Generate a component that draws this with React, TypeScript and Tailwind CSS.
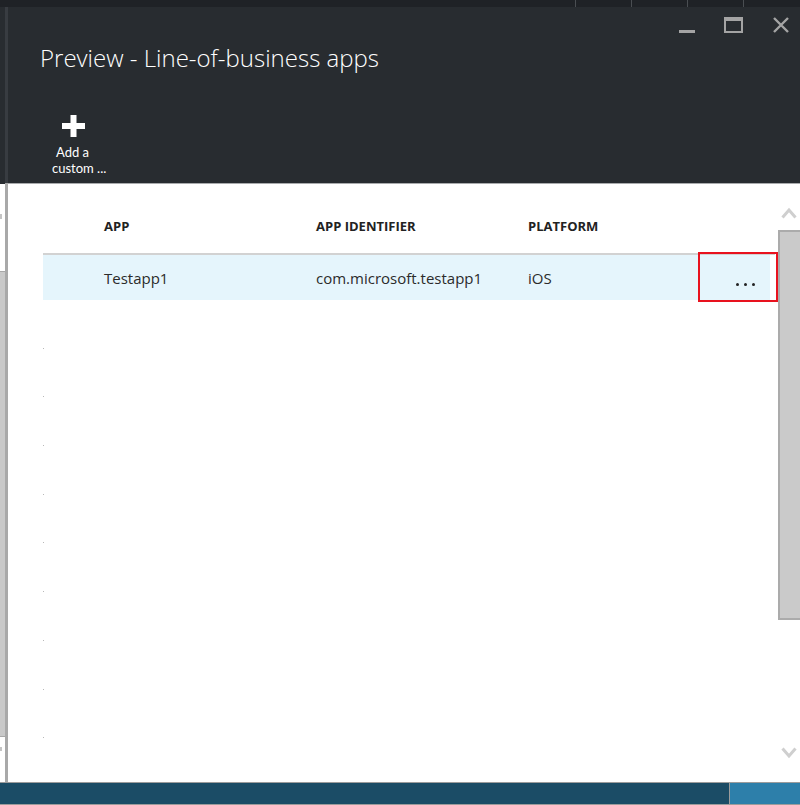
import React from "react";

const font = { fontFamily: '"Segoe UI", "Open Sans", "Noto Sans", sans-serif' };
const smallFont = { fontFamily: '"Segoe UI", Lato, "Open Sans", sans-serif' };

function Plus() {
  return (
    <svg width="23" height="22" viewBox="0 0 23 22">
      <rect x="8.5" y="0" width="6" height="22" fill="#ffffff" />
      <rect x="0" y="8" width="23" height="6" fill="#ffffff" />
    </svg>
  );
}

function Chevron({ up }: { up?: boolean }) {
  return (
    <svg width="16" height="12" viewBox="0 0 16 12">
      <path
        d={up ? "M1.5 10.5 L8 3 L14.5 10.5" : "M1.5 1.5 L8 9 L14.5 1.5"}
        fill="none"
        stroke="#cfcfcf"
        strokeWidth="3"
      />
    </svg>
  );
}

export default function App() {
  const emptyRows = Array.from({ length: 10 });
  return (
    <div className="w-[800px] h-[805px] flex flex-col overflow-hidden bg-white" style={font}>
      {/* top strip */}
      <div className="h-[7px] shrink-0 bg-[#1f2226] flex justify-end">
        <div className="w-[56px] border-l border-[#4a4e52]" />
        <div className="w-[56px] border-l border-[#4a4e52]" />
        <div className="w-[56px] border-l border-[#4a4e52]" />
        <div className="w-[57px] border-l border-[#4a4e52]" />
      </div>

      {/* middle */}
      <div className="h-[775px] shrink-0 flex overflow-hidden">
        {/* left sliver of previous blade */}
        <div className="w-[5px] flex flex-col">
          <div className="h-[177px] shrink-0 bg-[#282c30]" />
          <div className="h-[87px] shrink-0 bg-white pt-[30px]">
            <div className="w-[2px] h-[5px] bg-[#c4c4c4]" />
          </div>
          <div className="flex-1 bg-[#c9c9c9] border-t border-[#a8a8a8] border-b" />
          <div className="h-[45px] shrink-0 bg-white pt-[10px]">
            <div className="w-[2px] h-[4px] bg-[#c4c4c4]" />
          </div>
        </div>
        <div className="w-[3px] flex flex-col">
          <div className="h-[176px] shrink-0 bg-[#383c41]" />
          <div className="flex-1 bg-[#a9a9a9]" />
        </div>

        {/* blade */}
        <div className="flex-1 flex flex-col min-h-0">
          <div className="h-[177px] shrink-0 bg-[#282c30] border-b border-[#a9abad] flex flex-col">
            <div className="flex justify-end items-start pt-[10px] pr-[11px]">
              <div className="w-[16px] h-[16px] flex items-end">
                <div className="w-[16px] h-[3px] bg-[#a4a4a4]" />
              </div>
              <div className="ml-[29px] w-[19px] h-[16px] border-2 border-t-[4px] border-[#a4a4a4]" />
              <div className="ml-[30px] w-[16px] h-[16px]">
                <svg width="16" height="16" viewBox="0 0 16 16">
                  <path d="M1 1 L15 15 M15 1 L1 15" stroke="#a4a4a4" strokeWidth="2.4" />
                </svg>
              </div>
            </div>
            <div className="pl-[32px] mt-[9px] text-[24px] leading-[32px] font-light text-white">
              Preview - Line-of-business apps
            </div>
            <div className="pl-[54px] mt-[41px]">
              <Plus />
            </div>
            <div className="text-[13px] leading-[16px] text-white mt-[7px]" style={smallFont}>
              <div className="pl-[48px]">Add a</div>
              <div className="pl-[44px]">custom ...</div>
            </div>
          </div>

          {/* content */}
          <div className="flex-1 min-h-0 overflow-hidden flex">
            <div className="flex-1 pl-[35px]">
              <div className="h-[69px] pt-[34px] pl-[61px] flex text-[13px] leading-[16px] font-bold text-[#222222]">
                <div className="w-[212px]">APP</div>
                <div className="w-[212px]">APP IDENTIFIER</div>
                <div>PLATFORM</div>
              </div>
              <div className="relative w-[732px] h-[47px] border-t-2 border-[#d2d2d2]">
                <div className="w-[727px] h-[45px] bg-[#e5f5fc] flex pl-[61px] pt-[13px] text-[15px] leading-[20px] text-[#2b2b2b]">
                  <div className="w-[212px]">Testapp1</div>
                  <div className="w-[212px]">com.microsoft.testapp1</div>
                  <div className="w-[170px]">iOS</div>
                  <div className="pl-[38px] pt-[15px] flex gap-[5px]">
                    <div className="w-[3px] h-[3px] rounded-full bg-[#222]" />
                    <div className="w-[3px] h-[3px] rounded-full bg-[#222]" />
                    <div className="w-[3px] h-[3px] rounded-full bg-[#222]" />
                  </div>
                </div>
                <div className="absolute left-[655px] top-[-3px] w-[80px] h-[50px] border-2 border-[#e8121e]" />
              </div>
              {emptyRows.map((_, i) => (
                <div key={i} className="h-[48.7px] flex items-end">
                  <div className="w-[1px] h-[1px] bg-[#b8b8b8]" />
                </div>
              ))}
            </div>
            <div className="w-[22px] shrink-0 flex flex-col">
              <div className="pt-[23px] pl-[3px] h-[46px] shrink-0">
                <Chevron up />
              </div>
              <div className="h-[390px] shrink-0 bg-[#cacaca] border-l-2 border-t-2 border-b-2 border-[#ababab]" />
              <div className="pt-[127px] pl-[3px]">
                <Chevron />
              </div>
            </div>
          </div>
        </div>
      </div>

      {/* bottom bar */}
      <div className="h-[23px] shrink-0 flex border-t border-b border-[#9c9c9c]">
        <div className="w-[730px] bg-[#1b4c66] border-r border-[#9c9c9c]" />
        <div className="flex-1 bg-[#2d7faa]" />
      </div>
    </div>
  );
}
